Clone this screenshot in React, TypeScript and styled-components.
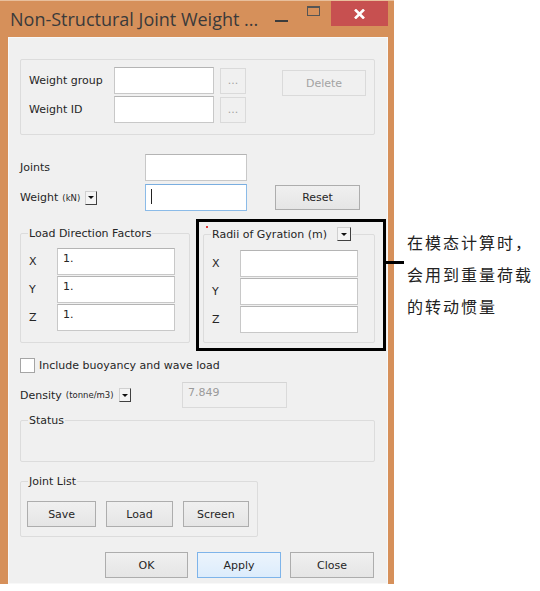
import styled, { createGlobalStyle } from "styled-components";

const GlobalStyle = createGlobalStyle`
  html, body {
    margin: 0;
    padding: 0;
    background: #ffffff;
  }
  * {
    box-sizing: border-box;
  }
`;

const Page = styled.div`
  position: relative;
  width: 540px;
  height: 591px;
  display: flex;
  align-items: flex-start;
  font-family: "DejaVu Sans", Tahoma, sans-serif;
  font-size: 11px;
  color: #262626;
`;

const Frame = styled.div`
  width: 394px;
  height: 584px;
  background: #d6905a;
  border-top: 1px solid #e8bf9c;
  padding: 0 6px 0 8px;
  display: flex;
  flex-direction: column;
`;

const TitleBar = styled.div`
  height: 36px;
  display: flex;
  align-items: flex-start;
`;

const Title = styled.div`
  flex: 1;
  padding: 6px 0 0 2px;
  font-family: "Open Sans", "Noto Sans", sans-serif;
  font-size: 18px;
  color: #3a3a3a;
  white-space: nowrap;
`;

const CaptionButton = styled.div<{ w: number; bg?: string }>`
  width: ${(p) => p.w}px;
  height: 25px;
  display: flex;
  align-items: center;
  justify-content: center;
  background: ${(p) => p.bg || "transparent"};
`;

const MinGlyph = styled.div`
  width: 13px;
  height: 2px;
  background: #3c3c3c;
  margin-top: 14px;
`;

const MaxGlyph = styled.div`
  width: 13px;
  height: 10px;
  border: 1px solid #555;
  border-top-width: 2px;
  margin-top: -5px;
`;

const Client = styled.div`
  flex: 1;
  background: #f0f0f0;
  border: 1px solid #f8f8f8;
  padding: 0 12px 0 11px;
  display: flex;
  flex-direction: column;
`;

const Group = styled.fieldset<{ w?: number; h: number; mt: number }>`
  position: relative;
  margin: ${(p) => p.mt}px 0 0 0;
  width: ${(p) => (p.w ? `${p.w}px` : "auto")};
  height: ${(p) => p.h}px;
  border: 1px solid #dcdcdc;
  border-radius: 2px;
  padding: 0 8px;
  min-width: 0;
`;

const Legend = styled.legend<{ gap?: number }>`
  padding: 0 1px;
  margin-left: -1px;
  font-size: 11px;
  line-height: 13px;
  color: #262626;
  display: flex;
  align-items: center;
  gap: ${(p) => p.gap || 0}px;
`;

const PlainGroup = styled.div`
  margin-top: 21px;
  height: 76px;
  border: 1px solid #dcdcdc;
  border-radius: 2px;
  padding: 7px 8px 0 8px;
  display: flex;
  align-items: flex-start;
`;

const IdGrid = styled.div`
  display: grid;
  grid-template-columns: 79px 100px 26px;
  grid-auto-rows: 27px;
  column-gap: 6px;
  row-gap: 2px;
  align-items: center;
`;

const Label = styled.span`
  white-space: nowrap;
  color: #262626;
`;

const Small = styled.span`
  font-size: 8.5px;
  margin-left: 4px;
  color: #262626;
`;

const TextBox = styled.div<{ w: number; h?: number; focus?: boolean; disabled?: boolean }>`
  width: ${(p) => p.w}px;
  height: ${(p) => p.h || 27}px;
  background: ${(p) => (p.disabled ? "#f0f0f0" : "#fff")};
  border: 1px solid ${(p) => (p.focus ? "#8bbbe8" : p.disabled ? "#dadada" : "#c8c8c8")};
  border-top-color: ${(p) => (p.focus ? "#7aaee0" : p.disabled ? "#d4d4d4" : "#b4b4b4")};
  color: ${(p) => (p.disabled ? "#9a9a9a" : "#262626")};
  padding: 3px 5px;
  line-height: 13px;
  display: flex;
  align-items: flex-start;
`;

const Caret = styled.span`
  width: 1px;
  height: 15px;
  margin-top: 1px;
  background: #222;
`;

const Button = styled.div<{ w: number; h?: number; primary?: boolean; disabled?: boolean }>`
  width: ${(p) => p.w}px;
  height: ${(p) => p.h || 26}px;
  display: flex;
  align-items: center;
  justify-content: center;
  background: ${(p) =>
    p.disabled ? "#f0f0f0" : p.primary ? "linear-gradient(#ecf4fc, #dcecfc)" : "linear-gradient(#f0f0f0, #e5e5e5)"};
  border: 1px solid ${(p) => (p.disabled ? "#dadada" : p.primary ? "#7eb4ea" : "#adadad")};
  color: ${(p) => (p.disabled ? "#a3a3a3" : "#262626")};
  white-space: nowrap;
`;

const Row = styled.div<{ mt: number }>`
  display: flex;
  align-items: center;
  margin-top: ${(p) => p.mt}px;
`;

const LabelCell = styled.div<{ w: number }>`
  width: ${(p) => p.w}px;
  display: flex;
  align-items: center;
`;

const DropButton = styled.span<{ w?: number }>`
  width: ${(p) => p.w || 12}px;
  height: 14px;
  margin-left: 5px;
  background: #f4f4f4;
  border: 1px solid #d0d0d0;
  border-right-color: #404040;
  border-bottom-color: #404040;
  display: inline-flex;
  align-items: center;
  justify-content: center;
  &::after {
    content: "";
    border-left: 3px solid transparent;
    border-right: 3px solid transparent;
    border-top: 3px solid #111;
  }
`;

const Columns = styled.div`
  display: flex;
  gap: 13px;
  margin-top: 16px;
`;

const AxisGrid = styled.div<{ top: number }>`
  display: grid;
  grid-template-columns: 28px 118px;
  grid-auto-rows: 27px;
  row-gap: 1px;
  align-items: center;
  margin-top: ${(p) => p.top}px;
`;

const RedMark = styled.span`
  position: absolute;
  left: 2px;
  top: -15px;
  width: 2px;
  height: 2px;
  background: #e03a3a;
`;

const CheckBox = styled.span`
  width: 15px;
  height: 15px;
  background: #fff;
  border: 1px solid #a5a5a5;
  margin-right: 4px;
`;

const ButtonRow = styled.div<{ mt: number; gap: number }>`
  display: flex;
  gap: ${(p) => p.gap}px;
  margin-top: ${(p) => p.mt}px;
`;

const DialogButtons = styled.div`
  display: flex;
  justify-content: flex-end;
  gap: 9px;
  margin-top: 15px;
  padding-right: 1px;
`;

const Callout = styled.div`
  position: absolute;
  left: 196px;
  top: 219px;
  width: 190px;
  height: 132px;
  border: 3px solid #000;
`;

const Leader = styled.div`
  position: absolute;
  left: 386px;
  top: 261px;
  width: 18px;
  height: 3px;
  background: #000;
`;

const Note = styled.div`
  margin: 226px 0 0 13px;
  font-family: "Noto Sans CJK SC", sans-serif;
  font-size: 16px;
  line-height: 32px;
  letter-spacing: 2px;
  color: #222;
`;

const axes = ["X", "Y", "Z"];

export default function App() {
  return (
    <Page>
      <GlobalStyle />
      <Frame>
        <TitleBar>
          <Title>Non-Structural Joint Weight ...</Title>
          <CaptionButton w={30}>
            <MinGlyph />
          </CaptionButton>
          <CaptionButton w={35}>
            <MaxGlyph />
          </CaptionButton>
          <CaptionButton w={57} bg="#c75050">
            <svg width="11" height="10" viewBox="0 0 11 10">
              <path d="M1 0.5 L10 9.5 M10 0.5 L1 9.5" stroke="#fff" strokeWidth="2.6" />
            </svg>
          </CaptionButton>
        </TitleBar>
        <Client>
          <PlainGroup>
            <IdGrid>
              <Label>Weight group</Label>
              <TextBox w={100} />
              <Button w={26} disabled>...</Button>
              <Label>Weight ID</Label>
              <TextBox w={100} />
              <Button w={26} disabled>...</Button>
            </IdGrid>
            <Button w={84} disabled style={{ marginLeft: 36, marginTop: 3 }}>
              Delete
            </Button>
          </PlainGroup>

          <Row mt={19}>
            <LabelCell w={125}>
              <Label>Joints</Label>
            </LabelCell>
            <TextBox w={102} />
          </Row>
          <Row mt={3}>
            <LabelCell w={125}>
              <Label>Weight</Label>
              <Small>(kN)</Small>
              <DropButton />
            </LabelCell>
            <TextBox w={102} focus>
              <Caret />
            </TextBox>
            <Button w={85} h={25} style={{ marginLeft: 28 }}>
              Reset
            </Button>
          </Row>

          <Columns>
            <Group w={170} h={116} mt={0}>
              <Legend>Load Direction Factors</Legend>
              <AxisGrid top={8}>
                {axes.map((a) => [
                  <Label key={a}>{a}</Label>,
                  <TextBox w={118} key={a + "v"}>
                    1.
                  </TextBox>,
                ])}
              </AxisGrid>
            </Group>
            <Group w={172} h={116} mt={0}>
              <RedMark />
              <Legend gap={5}>
                Radii of Gyration (m)
                <DropButton w={14} />
              </Legend>
              <AxisGrid top={9}>
                {axes.map((a) => [
                  <Label key={a}>{a}</Label>,
                  <TextBox w={118} key={a + "v"} />,
                ])}
              </AxisGrid>
            </Group>
          </Columns>

          <Row mt={15}>
            <CheckBox />
            <Label>Include buoyancy and wave load</Label>
          </Row>
          <Row mt={9}>
            <LabelCell w={162}>
              <Label>Density</Label>
              <Small>(tonne/m3)</Small>
              <DropButton />
            </LabelCell>
            <TextBox w={105} h={26} disabled>
              7.849
            </TextBox>
          </Row>

          <Group h={48} mt={6}>
            <Legend>Status</Legend>
          </Group>

          <Group w={238} h={62} mt={13}>
            <Legend>Joint List</Legend>
            <ButtonRow mt={13} gap={10} style={{ marginLeft: -2 }}>
              <Button w={70}>Save</Button>
              <Button w={67}>Load</Button>
              <Button w={67}>Screen</Button>
            </ButtonRow>
          </Group>

          <DialogButtons>
            <Button w={83}>OK</Button>
            <Button w={84} primary>
              Apply
            </Button>
            <Button w={84}>Close</Button>
          </DialogButtons>
        </Client>
      </Frame>
      <Note>
        在模态计算时，
        <br />
        会用到重量荷载
        <br />
        的转动惯量
      </Note>
      <Callout />
      <Leader />
    </Page>
  );
}
